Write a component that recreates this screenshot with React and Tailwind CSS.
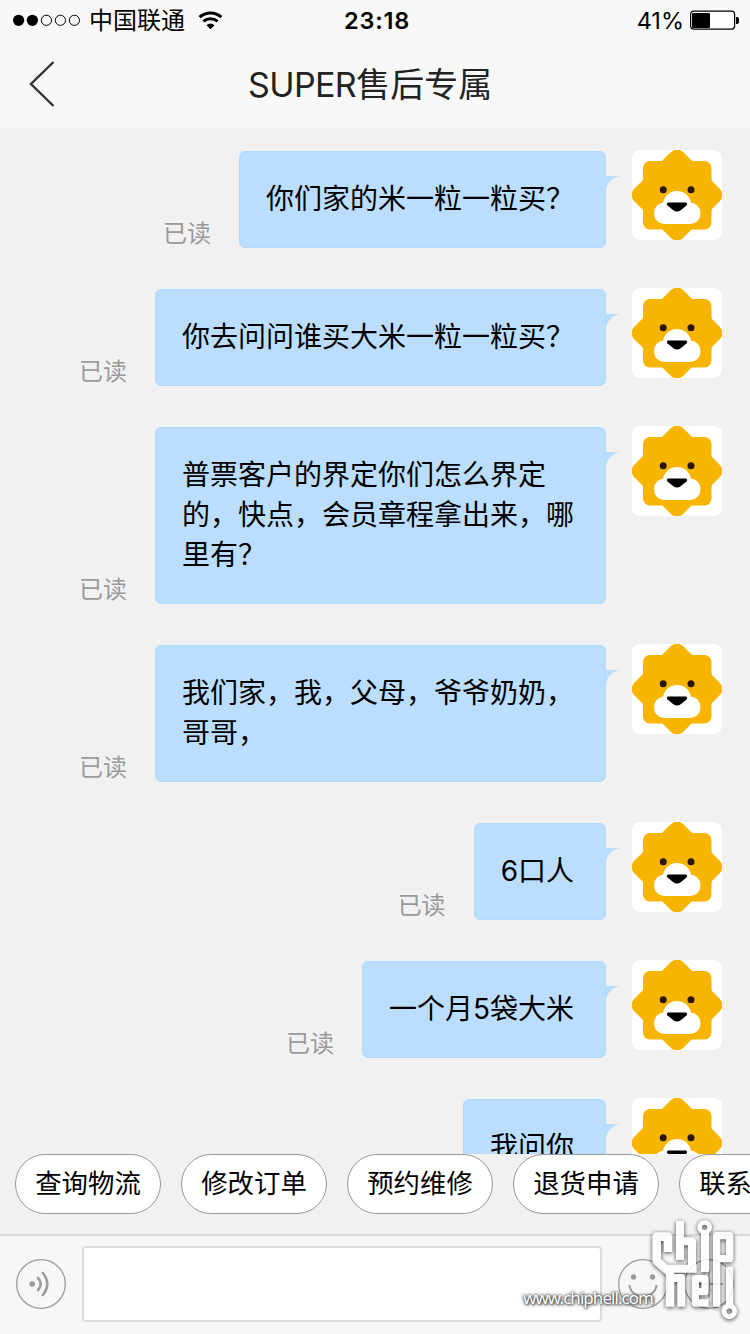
import React from "react";

const messages = [
  { id: 1, lines: ["你们家的米一粒一粒买？"] },
  { id: 2, lines: ["你去问问谁买大米一粒一粒买？"] },
  {
    id: 3,
    lines: ["普票客户的界定你们怎么界定", "的，快点，会员章程拿出来，哪", "里有？"],
  },
  { id: 4, lines: ["我们家，我，父母，爷爷奶奶，", "哥哥，"] },
  { id: 5, lines: ["6口人"] },
  { id: 6, lines: ["一个月5袋大米"] },
  { id: 7, lines: ["我问你"] },
];

const quickActions = ["查询物流", "修改订单", "预约维修", "退货申请", "联系客服"];

function StatusBar() {
  return (
    <div className="flex h-10 items-center text-black">
      <svg className="ml-3 shrink-0" width="70" height="14" viewBox="0 0 70 14">
        <circle cx="6.6" cy="7.3" r="5.6" />
        <circle cx="20.4" cy="7.3" r="5.6" />
        <g fill="none" stroke="#000" strokeWidth="1">
          <circle cx="34.4" cy="7.3" r="5.1" />
          <circle cx="48.4" cy="7.3" r="5.1" />
          <circle cx="62.4" cy="7.3" r="5.1" />
        </g>
      </svg>
      <span className="ml-[7px] w-[97px] pt-0.5 text-[24px] leading-10 whitespace-nowrap">中国联通</span>
      <svg className="ml-3 shrink-0" width="26" height="20" viewBox="0 0 26 20">
        <g fill="none" stroke="#000" strokeWidth="3">
          <path d="M1.6 7.2a16.2 16.2 0 0 1 21.8 0" />
          <path d="M5.4 11.4a10.6 10.6 0 0 1 14.2 0" />
        </g>
        <path d="M12.5 19.2l-4-4a5.8 5.8 0 0 1 8 0z" />
      </svg>
      <span className="ml-[120px] w-[70px] pt-0.5 text-[23.500px] leading-10 font-semibold tracking-[0.8px]">23:18</span>
      <span className="ml-auto pt-0.5 text-[23.500px] leading-10">41%</span>
      <svg className="mr-[11px] ml-1.5 shrink-0" width="49" height="20" viewBox="0 0 49 20">
        <rect x="0.6" y="1.1" width="44" height="18" rx="3" fill="#fff" stroke="#000" strokeWidth="1.2" />
        <rect x="2" y="3" width="18" height="15" rx="1" />
        <path d="M46 7h1q2 0 2 2v3q0 2-2 2h-1z" />
      </svg>
    </div>
  );
}

function Avatar() {
  return (
    <svg className="ml-3 size-[90px] shrink-0 rounded-lg bg-white" viewBox="0 0 90 90">
      <g fill="#f8b500">
        <rect x="11" y="11" width="68.500" height="68.500" rx="7" />
        <rect x="10.300" y="10.300" width="69.400" height="69.400" rx="9" transform="rotate(45 45 45)" />
      </g>
      <circle cx="31.200" cy="39.800" r="3.500" fill="#2b1703" />
      <circle cx="59" cy="39.800" r="3.500" fill="#2b1703" />
      <circle cx="45" cy="55" r="14" fill="#fff" />
      <rect x="22" y="52.500" width="46.500" height="21.500" rx="10.500" fill="#fff" />
      <path d="M36 52.500h18q2 1 .5 3l-5.500 4.500q-4 3-8 0l-5.500-4.500q-1.500-2 .5-3z" />
    </svg>
  );
}

function Message({ lines }) {
  return (
    <div className="flex items-start justify-end pr-7">
      <span className="mr-7 translate-y-px self-end text-[24px] leading-[30px] text-[#9a9a9a]">已读</span>
      <div className="mt-px rounded-md border border-[#b2dafc] bg-[#bbdefe] pt-[27px] pr-8 pb-7 pl-[26px] text-[28px] leading-10 whitespace-nowrap text-black">
        {lines.map((line) => (
          <p key={line} className="-mr-px">{line}</p>
        ))}
      </div>
      <svg className="mt-[25px] shrink-0" width="14" height="15" viewBox="0 0 14 15">
        <path d="M0 1h14Q3 3 0 14z" fill="#bbdefe" />
      </svg>
      <Avatar />
    </div>
  );
}

function QuickActions() {
  return (
    <div className="flex h-20 shrink-0 gap-5 overflow-hidden pl-[15px]">
      {quickActions.map((label) => (
        <button
          key={label}
          className="h-[60px] w-[146px] shrink-0 rounded-full border border-[#999] bg-white text-[26.400px] whitespace-nowrap text-black"
        >
          {label}
        </button>
      ))}
    </div>
  );
}

function InputBar() {
  return (
    <div className="flex h-[100px] shrink-0 items-center border-t-2 border-[#dcdcdc] bg-[#f7f7f7] pb-0.5">
      <svg className="ml-4 shrink-0" width="50" height="50" viewBox="0 0 50 50" fill="none" stroke="#9b9b9b">
        <circle cx="25" cy="25" r="24.300" strokeWidth="1.300" />
        <circle cx="16.200" cy="25" r="2.800" fill="#9b9b9b" stroke="none" />
        <path d="M22 19q5.500 6 0 12M26.800 14q9 11 0 22" strokeWidth="2.600" strokeLinecap="round" />
      </svg>
      <div className="ml-4 h-[76px] w-[520px] rounded border-2 border-[#dcdcdc] bg-white" />
      <svg className="ml-4 shrink-0" width="50" height="50" viewBox="0 0 50 50" fill="none" stroke="#9b9b9b">
        <circle cx="25" cy="25" r="24.300" strokeWidth="1.300" />
        <circle cx="15.500" cy="18" r="2.700" fill="#9b9b9b" stroke="none" />
        <circle cx="34.500" cy="18" r="2.700" fill="#9b9b9b" stroke="none" />
        <path d="M11.500 26c1 15 26 15 27 0" strokeWidth="2" />
      </svg>
      <svg className="ml-4 shrink-0" width="50" height="50" viewBox="0 0 50 50" fill="none" stroke="#9b9b9b">
        <circle cx="25" cy="25" r="24.300" strokeWidth="1.300" />
        <path d="M11 25h28M25 11v28" strokeWidth="1.600" />
      </svg>
    </div>
  );
}

// circuit-trace emblem with the site address, laid over the input bar
function Watermark() {
  return (
    <div className="pointer-events-none absolute right-0 bottom-0 h-[124px] w-[240px]">
      <svg
        className="absolute inset-0 opacity-85 drop-shadow-[0_1px_2px_rgba(0,0,0,0.85)]"
        width="240"
        height="124"
        viewBox="0 0 720 372"
        fill="none"
        stroke="#fff"
        strokeWidth="24"
        strokeLinejoin="round"
      >
        <path d="M474 126V80H440V152L480 188V290" strokeWidth="26" />
        <path d="M470 176H560M480 204H514V290" />
        <path d="M510 32V150M510 94H546V168" />
        <path d="M585 66V186" />
        <path d="M620 290V77H659V146H620" strokeWidth="22" />
        <path d="M596 279H556V206H585V245H556" strokeWidth="22" />
        <path d="M659 170V292" strokeWidth="22" />
        <circle cx="584" cy="52" r="15" strokeWidth="14" />
        <circle cx="658" cy="304" r="16" strokeWidth="15" />
      </svg>
      <span className="absolute top-[76px] left-[13px] font-['Noto_Sans'] text-[17px] leading-6 tracking-[-0.95px] text-white [text-shadow:0_0_2px_#333,1px_1px_3px_#444,0_0_4px_#666]">
        www.chiphell.com
      </span>
    </div>
  );
}

export default function App() {
  return (
    <div className="relative flex h-[1334px] w-[750px] flex-col overflow-hidden bg-[#f1f1f1] font-['Inter','Noto_Sans_CJK_SC',sans-serif]">
      <header className="h-32 shrink-0 bg-[#f8f8f8]">
        <StatusBar />
        <div className="flex h-[88px] items-center">
          <svg className="ml-[29px] shrink-0" width="26" height="46" viewBox="0 0 26 46">
            <path d="M24.500 1L2 23l22.500 22" fill="none" stroke="#333" strokeWidth="2.400" />
          </svg>
          <h1 className="ml-[193px] pt-0.5 text-[34px] leading-[50px] whitespace-nowrap text-[#222]">
            <span className="tracking-[-0.6px]">SUPER</span>售后专属
          </h1>
        </div>
      </header>

      <main className="flex min-h-0 flex-1 flex-col gap-10 overflow-hidden pt-[22px]">
        {messages.map((m) => (
          <Message key={m.id} lines={m.lines} />
        ))}
      </main>

      <QuickActions />
      <InputBar />
      <Watermark />
    </div>
  );
}
